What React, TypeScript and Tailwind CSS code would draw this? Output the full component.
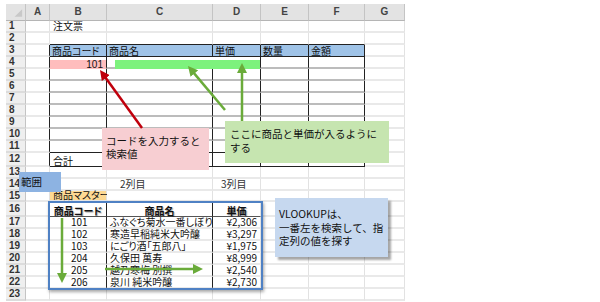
import React from 'react';

const COLS = ['', 'A', 'B', 'C', 'D', 'E', 'F', 'G'];
const ROWS = Array.from({ length: 24 }, (_, i) => i);

function rightCls(r: number, c: number): string {
  if (r === 0) return 'border-r border-r-[#c4c4c4]';
  if (c === 0) return 'border-r border-r-[#c4c4c4]';
  if (r >= 3 && r <= 12 && c >= 1 && c <= 6) return 'border-r border-r-[#222]';
  if (r >= 16 && r <= 22 && (c === 2 || c === 3)) return 'border-r border-r-[#222]';
  return 'border-r border-r-[#e2e2e2]';
}

function bottomCls(r: number, c: number): string {
  if (r === 0) return 'border-b border-b-[#b5b5b5]';
  if (c === 0) return 'border-b-2 border-b-[#dcdcdc]';
  if (c >= 2 && c <= 6) {
    if (r === 2 || r === 3 || r === 11 || r === 12) return 'border-b border-b-[#222]';
    if (r >= 4 && r <= 10) return 'border-b-2 border-b-[#bcbcbc]';
  }
  if (r === 16 && c >= 2 && c <= 4) return 'border-b border-b-[#555]';
  return 'border-b-2 border-b-[#e9e9e9]';
}

function bgCls(r: number, c: number): string {
  if (r === 0) return 'bg-[#e3e3e3]';
  if (c === 0) return 'bg-[#efefef]';
  if (r === 3 && c >= 2 && c <= 6) return 'bg-[#9fc3e7]';
  if (r === 15 && c === 2) return 'bg-[#fdd993]';
  return 'bg-white';
}

const master: [string, string, string][] = [
  ['101', 'ふなぐち菊水一番しぼり', '¥2,306'],
  ['102', '寒造早稲純米大吟醸', '¥3,297'],
  ['103', 'にごり酒「五郎八」', '¥1,975'],
  ['204', '久保田 萬寿', '¥8,999'],
  ['205', '越乃寒梅 別撰', '¥2,540'],
  ['206', '泉川 純米吟醸', '¥2,730'],
];

function content(r: number, c: number): React.ReactNode {
  if (r === 0) {
    if (c === 0)
      return (
        <svg width="20" height="16" viewBox="0 0 20 16" className="block">
          <path d="M17 5 L17 13 L9 13 Z" fill="#c8c8c8" />
        </svg>
      );
    return <span className="w-full text-center text-[10px] font-bold text-[#444] [font-family:'Liberation_Sans',Arial,sans-serif]">{COLS[c]}</span>;
  }
  if (c === 0)
    return <span className="pl-[3px] text-[10px] font-bold text-[#333] [font-family:'Liberation_Sans',Arial,sans-serif]">{r}</span>;
  if (r === 1 && c === 2) return <span className="pl-[3px]">注文票</span>;
  if (r === 3) {
    const t = ['', '', '商品コード', '商品名', '単価', '数量', '金額'][c];
    if (t) return <span className="pl-[2px]">{t}</span>;
  }
  if (r === 4 && c === 2)
    return (
      <div className="mt-[3px] flex h-[9px] w-full items-center justify-end self-start bg-[#ffbdbd] pr-[3px] [font-family:'Liberation_Sans',Arial,sans-serif] text-[10px]">
        101
      </div>
    );
  if (r === 4 && c === 3) return <div className="ml-[8px] mt-[3px] h-[9px] w-full self-start bg-[#7df27d]" />;
  if (r === 12 && c === 2) return <span className="pl-[3px]">合計</span>;
  if (r === 14 && c === 3) return <span className="pl-[13px] text-[#333]">2列目</span>;
  if (r === 14 && c === 4) return <span className="pl-[8px] text-[#333]">3列目</span>;
  if (r === 15 && c === 2) return <span className="pl-[3px]">商品マスター</span>;
  if (r === 16) {
    const t = ['', '', '商品コード', '商品名', '単価'][c];
    if (t)
      return <span className="w-full text-center font-bold [text-shadow:1px_1px_1px_rgba(0,0,0,0.35)]">{t}</span>;
  }
  if (r >= 17 && r <= 22) {
    const row = master[r - 17];
    if (c === 2) return <span className="pl-[21px]">{row[0]}</span>;
    if (c === 3) return <span className="pl-[3px]">{row[1]}</span>;
    if (c === 4) return <span className="w-full pr-[3px] text-right">{row[2]}</span>;
  }
  return null;
}

function Grid() {
  const cells: React.ReactNode[] = [];
  ROWS.forEach((r) => {
    COLS.forEach((_, c) => {
      if (r === 4 && c === 4) return;
      const span = r === 4 && c === 3 ? 'col-span-2' : '';
      const right = r === 4 && c === 3 ? 'border-r border-r-[#222]' : rightCls(r, c);
      const align = r === 0 || c === 0 ? 'items-center' : 'items-end';
      cells.push(
        <div
          key={`${r}-${c}`}
          className={`flex whitespace-nowrap overflow-visible leading-none ${align} ${span} ${right} ${bottomCls(r, c)} ${bgCls(r, c)}`}
        >
          {content(r, c)}
        </div>
      );
    });
  });
  return (
    <div className="ml-[6px] mt-[4px] grid w-[399px] grid-cols-[20px_24px_57px_106px_48px_48px_56px_40px] grid-rows-[17px_repeat(11,12px)_14px_12px_12px_11px_15px_repeat(7,12px)] text-[10px] text-[#111] [font-family:'Noto_Sans_CJK_JP',sans-serif] [font-feature-settings:'palt']">
      {cells}
    </div>
  );
}

export default function App() {
  return (
    <div className="relative h-[302px] w-[600px] overflow-hidden bg-white">
      <Grid />

      {/* selection frame around master */}
      <div className="absolute left-[48px] top-[201px] h-[89px] w-[215px] border-2 border-[#4f81c4] shadow-[1px_2px_3px_rgba(0,0,0,0.35)]" />

      {/* callouts */}
      <div className="absolute left-[102px] top-[128px] h-[42px] w-[107px] bg-[#f7ced2] px-[4px] pt-[7px] text-[10.5px] leading-[12.5px] text-[#111] [font-family:'Noto_Sans_CJK_JP',sans-serif]">
        コードを入力すると
        <br />
        検索値
      </div>
      <div className="absolute left-[225px] top-[121px] h-[42px] w-[164px] bg-[#c6e5b0] px-[5px] pt-[6px] text-[10.5px] leading-[14px] text-[#111] [font-family:'Noto_Sans_CJK_JP',sans-serif]">
        ここに商品と単価が入るように
        <br />
        する
      </div>
      <div className="absolute left-[19px] top-[172px] flex h-[20px] w-[42px] items-center bg-[#8db3e2] pl-[2px] text-[10.5px] text-[#111] [font-family:'Noto_Sans_CJK_JP',sans-serif]">
        範囲
      </div>
      <div className="absolute left-[275px] top-[198px] h-[59px] w-[113px] bg-[#c6d8ef] px-[4px] pt-[9px] text-[10.5px] leading-[13.5px] text-[#111] shadow-[3px_3px_2px_rgba(0,0,0,0.35)] [font-family:'Noto_Sans_CJK_JP',sans-serif]">
        VLOOKUPは、
        <br />
        一番左を検索して、指
        <br />
        定列の値を探す
      </div>

      {/* arrows */}
      <svg className="pointer-events-none absolute left-0 top-0" width="600" height="302" viewBox="0 0 600 302">
        <defs>
          <marker id="headRed" viewBox="0 0 10 10" markerWidth="10" markerHeight="10" refX="2" refY="5" orient="auto" markerUnits="userSpaceOnUse">
            <path d="M0 0 L10 5 L0 10 Z" fill="#c0000c" />
          </marker>
          <marker id="headGreen" viewBox="0 0 10 10" markerWidth="10" markerHeight="10" refX="2" refY="5" orient="auto" markerUnits="userSpaceOnUse">
            <path d="M0 0 L10 5 L0 10 Z" fill="#6aab3a" />
          </marker>
        </defs>
        <line x1="142" y1="128" x2="104.7" y2="76.5" stroke="#c0000c" strokeWidth="2.5" markerEnd="url(#headRed)" />
        <line x1="225" y1="110" x2="193.1" y2="72.1" stroke="#6aab3a" strokeWidth="2.5" markerEnd="url(#headGreen)" />
        <line x1="242" y1="121" x2="242" y2="71" stroke="#6aab3a" strokeWidth="2.5" markerEnd="url(#headGreen)" />
        <line x1="62" y1="218" x2="62" y2="275" stroke="#6aab3a" strokeWidth="2.5" markerEnd="url(#headGreen)" />
        <line x1="105" y1="269" x2="195" y2="269" stroke="#6aab3a" strokeWidth="2.5" markerEnd="url(#headGreen)" />
      </svg>
    </div>
  );
}
